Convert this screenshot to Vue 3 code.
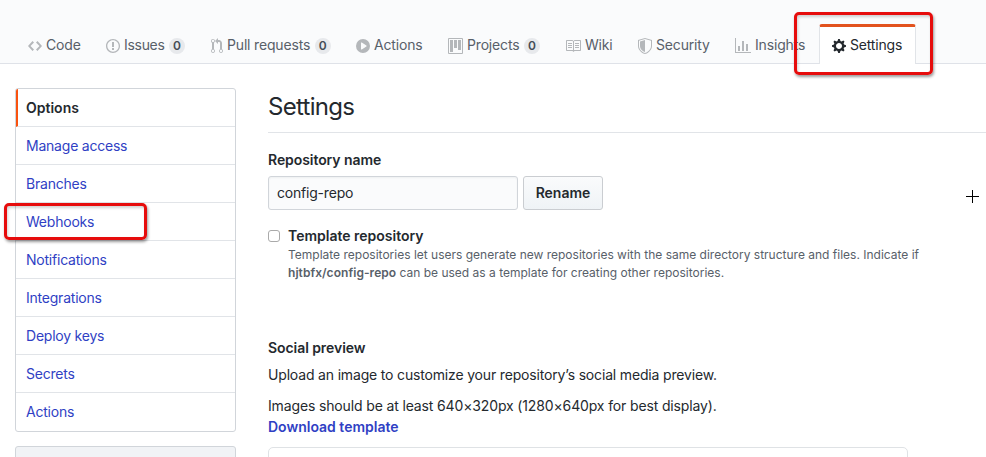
<script setup>
const tabs = [
  { id: 'code', label: 'Code', w: 14, d: 'M9.5 3L8 4.5 11.5 8 8 11.5 9.5 13 14 8 9.5 3zm-5 0L0 8l4.5 5L6 11.5 2.5 8 6 4.5 4.5 3z' },
  { id: 'issues', label: 'Issues', count: 0, w: 14, d: 'M7 2.3c3.14 0 5.7 2.56 5.7 5.7s-2.56 5.7-5.7 5.7A5.71 5.71 0 011.3 8c0-3.14 2.56-5.7 5.7-5.7zM7 1C3.14 1 0 4.14 0 8s3.14 7 7 7 7-3.14 7-7-3.14-7-7-7zm1 3H6v5h2V4zm0 6H6v2h2v-2z' },
  { id: 'pulls', label: 'Pull requests', count: 0, w: 12, d: 'M11 11.28V5c-.03-.78-.34-1.47-.94-2.06C9.46 2.35 8.78 2.03 8 2H7V0L4 3l3 3V4h1c.27.02.48.11.69.31.21.2.3.42.31.69v6.28A1.993 1.993 0 0010 15a1.993 1.993 0 001-3.72zm-1 2.92c-.66 0-1.2-.55-1.2-1.2 0-.65.55-1.2 1.2-1.2.65 0 1.2.55 1.2 1.2 0 .65-.55 1.2-1.2 1.2zM4 3c0-1.11-.89-2-2-2a1.993 1.993 0 00-1 3.72v6.56A1.993 1.993 0 002 15a1.993 1.993 0 001-3.72V4.72c.59-.34 1-.98 1-1.72zm-.8 10c0 .66-.55 1.2-1.2 1.2-.65 0-1.2-.55-1.2-1.2 0-.65.55-1.2 1.2-1.2.65 0 1.2.55 1.2 1.2zM2 4.2C1.34 4.2.8 3.65.8 3c0-.65.55-1.2 1.2-1.2.65 0 1.2.55 1.2 1.2 0 .65-.55 1.2-1.2 1.2z' },
  { id: 'actions', label: 'Actions', w: 14, d: 'M14 8A7 7 0 110 8a7 7 0 0114 0zm-8.223 3.482l4.599-3.066a.5.5 0 000-.832L5.777 4.518A.5.5 0 005 4.934v6.132a.5.5 0 00.777.416z' },
  { id: 'projects', label: 'Projects', count: 0, w: 15, d: 'M10 12h3V2h-3v10zm-4-2h3V2H6v8zm-4 4h3V2H2v12zm-1 1h13V1H1v14zM14 0H1a1 1 0 00-1 1v14a1 1 0 001 1h13a1 1 0 001-1V1a1 1 0 00-1-1z' },
  { id: 'wiki', label: 'Wiki', w: 16, d: 'M3 5h4v1H3V5zm0 3h4V7H3v1zm0 2h4V9H3v1zm11-5h-4v1h4V5zm0 2h-4v1h4V7zm0 2h-4v1h4V9zm2-6v9c0 .55-.45 1-1 1H9.5l-1 1-1-1H2c-.55 0-1-.45-1-1V3c0-.55.45-1 1-1h5.5l1 1 1-1H15c.55 0 1 .45 1 1zm-8 .5L7.5 3H2v9h6V3.5zm7-.5H9.5l-.5.5V12h6V3z' },
  { id: 'security', label: 'Security', w: 14, d: 'M0 2l7-2 7 2v6.02C14 12.69 8.69 16 7 16c-1.69 0-7-3.31-7-7.98V2zm1 .75L7 1l6 1.75v5.268C13 12.104 8.449 15 7 15c-1.449 0-6-2.896-6-6.982V2.75zm1 .75L7 2v12c-1.207 0-5-2.482-5-5.985V3.5z' },
  { id: 'insights', label: 'Insights', w: 16, d: 'M16 14v1H0V0h1v14h15zM5 13H3V8h2v5zm4 0H7V3h2v10zm4 0h-2V6h2v7z' },
  { id: 'settings', label: 'Settings', w: 14, d: 'M14 8.77v-1.6l-1.94-.64-.45-1.09.88-1.84-1.13-1.13-1.81.91-1.09-.45-.69-1.92h-1.6l-.63 1.94-1.11.45-1.84-.88-1.13 1.13.91 1.81-.45 1.09L0 7.23v1.59l1.94.64.45 1.09-.88 1.84 1.13 1.13 1.81-.91 1.09.45.69 1.92h1.59l.63-1.94 1.11-.45 1.84.88 1.13-1.13-.92-1.81.47-1.09L14 8.75v.02zM7 11c-1.66 0-3-1.34-3-3s1.34-3 3-3 3 1.34 3 3-1.34 3-3 3z' },
]
const menu = ['Options', 'Manage access', 'Branches', 'Webhooks', 'Notifications', 'Integrations', 'Deploy keys', 'Secrets', 'Actions']
</script>

<template>
  <div class="page">
    <nav class="tabs">
      <a v-for="t in tabs" :key="t.id" class="tab" :class="[t.id, { selected: t.id === 'settings' }]">
        <svg :width="t.w" height="16" :viewBox="`0 0 ${t.w} 16`"><path fill-rule="evenodd" :d="t.d" /></svg>
        <span class="label">{{ t.label }}</span>
        <span v-if="t.count !== undefined" class="counter">{{ t.count }}</span>
      </a>
    </nav>
    <div class="body">
      <aside class="side">
        <div class="menu">
          <a v-for="(m, i) in menu" :key="m" class="item" :class="{ current: i === 0 }">{{ m }}</a>
        </div>
        <div class="menu next"></div>
      </aside>
      <main class="main">
        <h2 class="title">Settings</h2>
        <label class="field-label">Repository name</label>
        <div class="row">
          <input class="input" value="config-repo" />
          <button class="btn">Rename</button>
        </div>
        <div class="template">
          <span class="checkbox"></span>
          <div>
            <div class="template-title">Template repository</div>
            <div class="note">Template repositories let users generate new repositories with the same directory structure and files. Indicate if</div>
            <div class="note"><b>hjtbfx/config-repo</b> can be used as a template for creating other repositories.</div>
          </div>
        </div>
        <div class="social-title">Social preview</div>
        <p class="p1">Upload an image to customize your repository’s social media preview.</p>
        <p class="p2">Images should be at least 640×320px (1280×640px for best display).</p>
        <a class="download">Download template</a>
        <div class="preview"></div>
      </main>
    </div>
    <div class="mark mark-settings"></div>
    <div class="mark mark-webhooks"></div>
    <svg class="cursor" width="13" height="13" viewBox="0 0 13 13"><path d="M6 0h1v6h6v1H7v6H6V7H0V6h6z" /></svg>
  </div>
</template>

<style>
body { background: #fff; overflow: hidden; }
</style>

<style scoped>
* { box-sizing: border-box; }
.page { position: relative; width: 986px; height: 457px; overflow: hidden; background: #fff; color: #24292e; font: 14px/21px Inter, "Liberation Sans", sans-serif; white-space: nowrap; }
.tabs { height: 64px; padding: 24px 0 0 15px; display: grid; grid-template-columns: 78px 105px 145px 92px 117px 73px 97px 97px 97px; background: #fafbfc; border-bottom: 1px solid #dfe2e8; }
.tab { display: flex; align-items: center; height: 40px; padding: 3px 0 0 13px; color: #586069; letter-spacing: -.17px; }
.tab svg { flex: none; fill: #b4b7ba; margin-right: 4px; }
.label { padding-bottom: 2px; }
.tab.issues .label { letter-spacing: -.3px; }
.tab.selected { padding: 0 0 0 12px; border: 1px solid #e1e4e8; border-top: 3px solid #e2521d; border-bottom: 0; border-radius: 3px 3px 0 0; background: #fff; color: #24292e; }
.tab.selected svg { fill: #24292e; }
.counter { width: 16px; height: 16px; margin-left: 4.5px; border-radius: 8px; background: #e7e9ec; color: #444d56; font-size: 12px; line-height: 16px; font-weight: 600; text-align: center; letter-spacing: 0; }
.body { display: flex; padding: 24px 0 0 15px; }
.side { width: 221px; margin-right: 32px; flex: none; }
.menu { border: 1px solid #d1d5da; border-radius: 3px; background: #fff; overflow: hidden; }
.item { display: block; height: 38px; padding-left: 10px; line-height: 38px; border-bottom: 1px solid #e1e4e8; color: #303fc4; letter-spacing: -.22px; }
.item:last-child { border-bottom: 0; }
.current { padding-left: 8px; border-left: 2px solid #f9520f; color: #24292e; font-weight: 600; letter-spacing: 0; }
.next { height: 40px; margin-top: 14px; background: #f1f3f6; }
.main { flex: 1; }
.title { margin: 0; height: 45px; padding-top: 1px; border-bottom: 1px solid #e1e4e8; font-size: 24px; line-height: 36px; font-weight: 400; letter-spacing: -.7px; }
.field-label { display: block; margin-top: 16px; font-weight: 600; letter-spacing: -.07px; }
.row { display: flex; gap: 5px; margin-top: 6px; }
.input { width: 250px; height: 34px; padding: 0 8px 2px; border: 1px solid #d1d5da; border-radius: 3px; background: #fafbfc; color: #24292e; font: inherit; letter-spacing: -.2px; box-shadow: inset 0 1px 2px rgba(27,31,35,.05); }
.btn { width: 80px; height: 34px; padding: 0 0 2px; border: 1px solid #cacdd1; border-radius: 3px; background: linear-gradient(#fafbfc, #eff3f6); color: #24292e; font: inherit; font-weight: 600; }
.template { display: flex; margin-top: 15px; }
.checkbox { width: 12px; height: 12px; margin: 5px 8px 0 0; border: 1px solid #aaa; border-radius: 3px; background: #fff; }
.template-title { font-weight: 600; height: 21px; }
.note { height: 18px; font-size: 12px; line-height: 18px; color: #586069; white-space: pre; }
.note b { font-weight: 600; letter-spacing: .05px; }
.social-title { margin-top: 55px; font-weight: 600; letter-spacing: -.07px; }
p { margin: 0; }
.p1 { margin-top: 6px; letter-spacing: -.17px; }
.p2 { margin-top: 10px; letter-spacing: -.14px; }
.download { display: block; color: #303fc4; font-weight: 600; }
.preview { width: 640px; height: 60px; margin-top: 10px; border: 1px solid #dfe2e5; border-radius: 5px; }
.mark { position: absolute; border: 3px solid #e60c0c; border-radius: 5px; box-shadow: 1px 2px 3px rgba(0,0,0,.4), inset 1px 2px 3px rgba(0,0,0,.18); }
.mark-settings { left: 794px; top: 12px; width: 139px; height: 63px; }
.mark-webhooks { left: 4px; top: 203px; width: 143px; height: 37px; }
.cursor { position: absolute; left: 966px; top: 190px; }
</style>
